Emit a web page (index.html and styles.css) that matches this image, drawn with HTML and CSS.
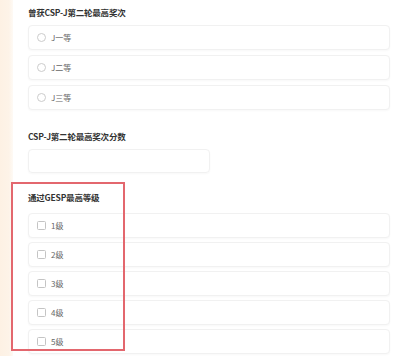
FILE: index.html
```html
<!DOCTYPE html>
<html lang="zh-CN">
<head>
  <meta charset="UTF-8">
  <title>报名信息</title>
  <link rel="stylesheet" href="styles.css">
</head>
<body>
  <div class="side"></div>

  <main class="form">
    <!-- CSP-J 奖次 -->
    <section class="field">
      <h3 class="field-title">曾获CSP-J第二轮最高奖次</h3>
      <div class="options radios">
        <label class="option"><span class="radio"></span>J一等</label>
        <label class="option"><span class="radio"></span>J二等</label>
        <label class="option"><span class="radio"></span>J三等</label>
      </div>
    </section>

    <!-- 分数 -->
    <section class="field field-score">
      <h3 class="field-title">CSP-J第二轮最高奖次分数</h3>
      <div class="text-input"></div>
    </section>

    <!-- GESP -->
    <section class="field field-gesp">
      <div class="highlight"></div>
      <h3 class="field-title">通过GESP最高等级</h3>
      <div class="options checks">
        <label class="option"><span class="check"></span>1级</label>
        <label class="option"><span class="check"></span>2级</label>
        <label class="option"><span class="check"></span>3级</label>
        <label class="option"><span class="check"></span>4级</label>
        <label class="option"><span class="check"></span>5级</label>
      </div>
    </section>
  </main>
</body>
</html>
```

FILE: styles.css
```css
html, body {
  margin: 0;
  height: 100%;
  overflow: hidden;
}

body {
  font-family: "Noto Sans CJK SC", "Noto Sans", sans-serif;
  background-color: #ffffff;
  color: #333333;
  display: flex;
}

.side {
  width: 13px;
  flex-shrink: 0;
  background: linear-gradient(to right, #fdf1e4 0, #fdf3e8 9px, #fefaf5 13px);
}

.form {
  flex: 1;
  padding: 4px 8px 0 15px;
}

.field {
  position: relative;
}

.field-title {
  margin: 0;
  height: 16px;
  line-height: 16px;
  font-size: 8.5px;
  font-weight: bold;
  color: #333333;
  letter-spacing: -0.2px;
}

.options {
  display: flex;
  flex-direction: column;
}

.radios {
  margin-top: 5px;
  gap: 5px;
}

.checks {
  margin-top: 8px;
  gap: 4px;
}

.option {
  display: flex;
  align-items: center;
  height: 25px;
  box-sizing: border-box;
  padding-left: 8px;
  border: 1px solid #f1f1f1;
  border-radius: 4px;
  background-color: #ffffff;
  box-shadow: 0 1px 2px rgba(0, 0, 0, 0.03);
  font-size: 8px;
  color: #666666;
}

.radio {
  width: 9px;
  height: 9px;
  box-sizing: border-box;
  border: 1px solid #cccccc;
  border-radius: 50%;
  margin-right: 5px;
}

.check {
  width: 9px;
  height: 9px;
  box-sizing: border-box;
  border: 1px solid #c4c4c4;
  border-radius: 1.5px;
  margin-right: 5px;
}

.field-score {
  margin-top: 18px;
}

.text-input {
  margin-top: 5px;
  width: 182px;
  height: 24px;
  box-sizing: border-box;
  border: 1px solid #f1f1f1;
  border-radius: 4px;
  box-shadow: 0 1px 2px rgba(0, 0, 0, 0.03);
}

.field-gesp {
  margin-top: 16px;
}

.highlight {
  position: absolute;
  left: -17px;
  top: -7px;
  width: 110px;
  height: 165px;
  border: 2px solid #e3676e;
  pointer-events: none;
}
```
